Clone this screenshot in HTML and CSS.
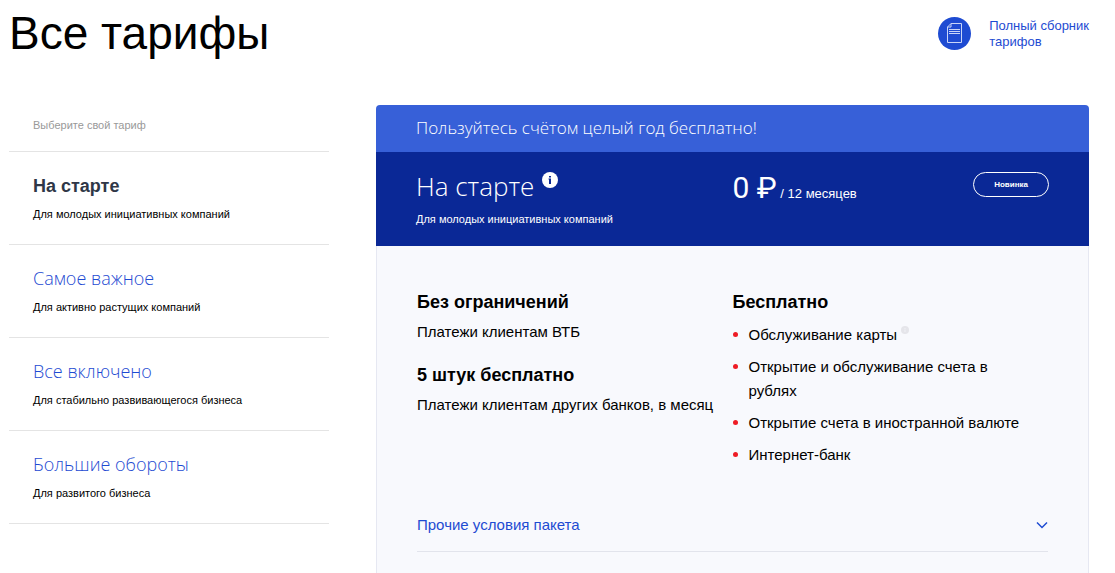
FILE: index.html
```
<!DOCTYPE html>
<html lang="ru">
<head>
<meta charset="utf-8">
<title>Все тарифы</title>
<link rel="stylesheet" href="styles.css">
</head>
<body>
<header class="header">
  <h1 class="page-title">Все тарифы</h1>
  <a class="doc-link" href="#">
    <svg class="doc-icon" viewBox="0 0 33 33" width="33" height="33" aria-hidden="true">
      <circle cx="16.5" cy="16.5" r="16.5" fill="#1e4bd2"/>
      <g fill="none" stroke="#c9d5f8" stroke-width="1">
        <path d="M13 6.500H23.500V25.500H9.500V10Z M13 6.500V10H9.500"/>
        <path d="M11 12.500H22M11 14.500H22M11 16.500H22"/>
      </g>
    </svg>
    <span>Полный сборник<br>тарифов</span>
  </a>
</header>
<main class="content">
  <nav class="tariffs" aria-label="Тарифы">
    <p class="tariffs-hint">Выберите свой тариф</p>
    <a class="tariff tariff-active" href="#"><span class="tariff-name">На старте</span><span class="tariff-note">Для молодых инициативных компаний</span></a>
    <a class="tariff" href="#"><span class="tariff-name">Самое важное</span><span class="tariff-note">Для активно растущих компаний</span></a>
    <a class="tariff" href="#"><span class="tariff-name">Все включено</span><span class="tariff-note">Для стабильно развивающегося бизнеса</span></a>
    <a class="tariff" href="#"><span class="tariff-name">Большие обороты</span><span class="tariff-note">Для развитого бизнеса</span></a>
  </nav>
  <section class="card">
    <p class="promo">Пользуйтесь счётом целый год бесплатно!</p>
    <div class="card-head">
      <div>
        <div class="title-row">
          <h2 class="card-title">На старте</h2>
          <button class="info" type="button" aria-label="Подробнее">
            <svg viewBox="0 0 16 16" width="16" height="16"><circle cx="8" cy="8" r="8" fill="#fff"/><path d="M7 4h2v1.500h-2zM6.500 6.500h2.500v5.500h-2v-4.500h-.5z" fill="#0a2896"/></svg>
          </button>
        </div>
        <p class="card-note">Для молодых инициативных компаний</p>
      </div>
      <div class="price-row">
        <p class="price"><span class="amount">0 ₽</span> / 12 месяцев</p>
        <span class="badge">Новинка</span>
      </div>
    </div>
    <div class="card-body">
      <div class="columns">
        <div>
          <h3 class="feature">Без ограничений</h3>
          <p class="feature-text">Платежи клиентам ВТБ</p>
          <h3 class="feature">5 штук бесплатно</h3>
          <p class="feature-text">Платежи клиентам других банков, в месяц</p>
        </div>
        <div>
          <h3 class="feature">Бесплатно</h3>
          <ul class="free-list">
            <li>Обслуживание карты <button class="hint" type="button" aria-label="Подсказка"><svg viewBox="0 0 8 8" width="8" height="8"><circle cx="4" cy="4" r="4" fill="#e5e5ea"/><path d="M4 2v1M4 3.500v2.500" stroke="#f0f1f6"/></svg></button></li>
            <li>Открытие и обслуживание счета в рублях</li>
            <li>Открытие счета в иностранной валюте</li>
            <li>Интернет-банк</li>
          </ul>
        </div>
      </div>
      <button class="more" type="button" aria-expanded="false">
        <span>Прочие условия пакета</span>
        <svg viewBox="0 0 12 8" width="12" height="8" aria-hidden="true"><path d="M1 1.500L6 6.500L11 1.500" fill="none" stroke="#1e4bd2" stroke-width="1.500"/></svg>
      </button>
    </div>
  </section>
</main>
</body>
</html>
```
FILE: styles.css
```
* { box-sizing: border-box; }

body {
  display: flex;
  flex-direction: column;
  min-height: 100vh;
  margin: 0;
  padding: 0 26px 0 9px;
  background: #fff;
  color: #000;
  font-family: "Liberation Sans", Arial, sans-serif;
  font-size: 15px;
}

h1, h2, h3, p, ul { margin: 0; padding: 0; font-weight: 400; }

a { color: #1e4bd2; text-decoration: none; }

button {
  padding: 0;
  border: 0;
  background: none;
  color: inherit;
  font: inherit;
  cursor: pointer;
}

svg { display: block; }

.header {
  display: flex;
  justify-content: space-between;
  align-items: flex-start;
  padding: 7px 0 46px;
}

.page-title { font-size: 46px; line-height: 52px; }

.doc-link {
  display: flex;
  align-items: flex-end;
  gap: 18px;
  padding-top: 10px;
  font-size: 13px;
  line-height: 16px;
}

.content { display: flex; flex: 1; gap: 47px; }

.tariffs { flex: 0 0 320px; }

.tariffs-hint {
  padding: 12px 24px 18px;
  border-bottom: 1px solid #e4e4e4;
  color: #999;
  font-size: 11px;
  line-height: 16px;
}

.tariff {
  display: block;
  padding: 20px 24px;
  border-bottom: 1px solid #e4e4e4;
}

.tariff-name {
  display: block;
  font-family: "Open Sans", sans-serif;
  font-size: 18px;
  font-weight: 300;
  line-height: 26px;
}

.tariff-active .tariff-name {
  color: #2f3747;
  font-family: "Liberation Sans", Arial, sans-serif;
  font-weight: 700;
  line-height: 28px;
}

.tariff-note {
  display: block;
  padding: 8px 0 2px;
  color: #000;
  font-size: 11px;
  line-height: 16px;
}

.tariff-active .tariff-note { padding-top: 6px; }

.card {
  display: flex;
  flex: 1;
  flex-direction: column;
  min-width: 0;
}

.promo {
  padding: 11px 40px 12px;
  border-radius: 4px 4px 0 0;
  background: #3760d8;
  color: #fff;
  font-family: "Open Sans", sans-serif;
  font-size: 17px;
  font-weight: 300;
  line-height: 24px;
}

.card-head {
  display: grid;
  grid-template-columns: 1fr 1fr;
  padding: 20px 40px 19px;
  background: #0a2896;
  color: #fff;
}

.title-row { display: flex; align-items: flex-start; gap: 8px; }

.card-title {
  font-family: "Open Sans", sans-serif;
  font-size: 26px;
  font-weight: 300;
  line-height: 28px;
}

.card-note { padding-top: 11px; font-size: 11px; line-height: 16px; }

.price-row {
  display: flex;
  justify-content: space-between;
  align-items: flex-start;
}

.price { font-size: 13px; line-height: 32px; }

.amount { font-family: Roboto, sans-serif; font-size: 30px; }

.badge {
  padding: 0 20px;
  border: 1px solid #fff;
  border-radius: 13px;
  font-size: 8px;
  font-weight: 700;
  line-height: 23px;
}

.card-body {
  flex: 1;
  padding: 44px 40px 21px;
  border: solid #e6e8f2;
  border-width: 0 1px;
  background: #f8f9fd;
}

.columns { display: grid; grid-template-columns: 1fr 1fr; }

.feature { font-size: 18px; font-weight: 700; line-height: 24px; }

.feature-text { padding: 6px 0 19px; line-height: 24px; }

.free-list {
  display: grid;
  gap: 8px;
  padding: 9px 24px 0 0;
  list-style: none;
  line-height: 24px;
}

.free-list li { position: relative; padding-left: 16px; }

.free-list li::before {
  position: absolute;
  top: 9px;
  left: 0;
  width: 5px;
  height: 5px;
  border-radius: 50%;
  background: #ee1c25;
  content: "";
}

.hint { display: inline-block; vertical-align: super; }

.more {
  display: flex;
  justify-content: space-between;
  align-items: center;
  width: 100%;
  margin-top: 46px;
  padding-bottom: 14px;
  border-bottom: 1px solid #e2e4ec;
  color: #1e4bd2;
  line-height: 24px;
}
```
